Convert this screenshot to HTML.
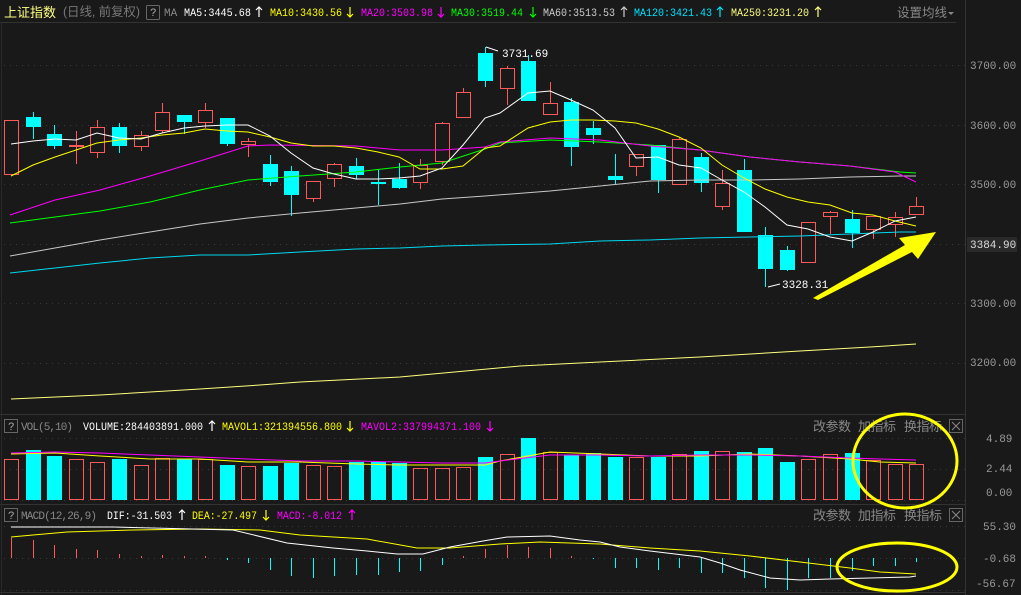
<!DOCTYPE html>
<html><head><meta charset="utf-8"><style>
html,body{margin:0;padding:0;background:#191919;width:1021px;height:595px;overflow:hidden}
svg{display:block}
text{font-family:"Liberation Mono","DejaVu Sans Mono",monospace;font-size:11px}
.cn{font-family:"Liberation Sans","Noto Sans CJK SC",sans-serif}
</style></head><body>
<svg id="s" width="1021" height="595" xmlns="http://www.w3.org/2000/svg">
<rect width="1021" height="595" fill="#191919"/>
<line x1="0" y1="22.5" x2="956" y2="22.5" stroke="#333"/>
<line x1="965.5" y1="0" x2="965.5" y2="595" stroke="#333"/>
<line x1="0" y1="414.5" x2="965" y2="414.5" stroke="#333"/>
<line x1="0" y1="504.5" x2="965" y2="504.5" stroke="#333"/>
<line x1="0" y1="592.5" x2="965" y2="592.5" stroke="#333"/>
<line x1="1.5" y1="22" x2="1.5" y2="595" stroke="#2a2a2a"/>
<g id="grid" stroke="#3a3a3a" stroke-dasharray="1,5"></g>
<g id="g"></g>
<text x="4" y="17" class="cn" fill="#ffff80" style="font-size:13px">上证指数</text>
<text x="63" y="16" class="cn" fill="#777" style="font-size:12.5px" textLength="77">(日线, 前复权)</text>
<rect x="146.5" y="5.5" width="13" height="14" fill="none" stroke="#666" rx="1"/>
<text x="150" y="16" fill="#aaa">?</text>
<text x="164" y="16" fill="#888">MA</text>
<g id="hdr"></g>
<text x="897" y="17" class="cn" fill="#888" style="font-size:12.5px">设置均线</text>
<path d="M948 12 l3 3 l3 -3z" fill="#888"/>
<g fill="#999">
<text x="970" y="69">3700.00</text><text x="970" y="129">3600.00</text><text x="970" y="188">3500.00</text>
<text x="970" y="307">3300.00</text><text x="970" y="366">3200.00</text>
<text x="986" y="442">4.89</text><text x="986" y="472">2.44</text><text x="986" y="496">0.00</text>
<text x="983" y="530">55.30</text><text x="983" y="562">-0.68</text><text x="976" y="587">-56.67</text>
</g>
<rect x="967" y="237" width="50" height="15" fill="#2a2a2a"/>
<text x="970" y="248" fill="#ddd">3384.90</text>
<text x="502" y="57" fill="#fff">3731.69</text>
<path d="M486 47 l12 4" stroke="#fff"/>
<text x="782" y="288" fill="#fff">3328.31</text>
<path d="M768 287 l12 -3" stroke="#fff"/>
<rect x="4.5" y="419.5" width="13" height="13" fill="none" stroke="#666"/>
<text x="8" y="430" fill="#aaa">?</text>
<text x="21" y="430" fill="#888" textLength="52">VOL(5,10)</text>
<rect x="949.5" y="419.5" width="13" height="13" fill="none" stroke="#666"/>
<path d="M952 422 l8 8 M960 422 l-8 8" stroke="#888"/>
<rect x="4.5" y="508.5" width="13" height="13" fill="none" stroke="#666"/>
<text x="8" y="519" fill="#aaa">?</text>
<text x="21" y="519" fill="#888" textLength="76">MACD(12,26,9)</text>
<rect x="949.5" y="508.5" width="13" height="13" fill="none" stroke="#666"/>
<path d="M952 511 l8 8 M960 511 l-8 8" stroke="#888"/>
<g id="top"></g>
</svg>
<script>
var NS="http://www.w3.org/2000/svg",G=document.getElementById('g'),T=document.getElementById('top'),GR=document.getElementById('grid'),H=document.getElementById('hdr');
function el(p,n,a){var e=document.createElementNS(NS,n);for(var k in a)e.setAttribute(k,a[k]);p.appendChild(e);return e;}
function lab(x,y,w,s,col,ax){var t=el(H,'text',{x:x,y:y,fill:col,textLength:w,lengthAdjust:'spacingAndGlyphs'});t.textContent=s;
 if(ax!==undefined){var d=ax[1]=='u'?'M'+ax[0]+' '+(y+1)+' v-10 M'+(ax[0]-3)+' '+(y-6)+' l3 -3 l3 3':'M'+ax[0]+' '+(y-9)+' v10 M'+(ax[0]-3)+' '+(y-2)+' l3 3 l3 -3';
 el(H,'path',{d:d,stroke:col,fill:'none','stroke-width':1.2});}}
lab(184,16,67,"MA5:3445.68","#fff",[259,'u']);
lab(270,16,72,"MA10:3430.56","#ffff00",[350,'d']);
lab(361,16,72,"MA20:3503.98","#ff00ff",[441,'d']);
lab(451,16,72,"MA30:3519.44","#00ff00",[533,'d']);
lab(543,16,72,"MA60:3513.53","#ccc",[624,'u']);
lab(634,16,78,"MA120:3421.43","#00e5ff",[720,'u']);
lab(731,16,78,"MA250:3231.20","#ffff80",[818,'u']);
lab(83,430,120,"VOLUME:284403891.000","#fff",[212,'u']);
lab(222,430,120,"MAVOL1:321394556.800","#ffff00",[350,'d']);
lab(361,430,120,"MAVOL2:337994371.100","#ff00ff",[490,'d']);
lab(107,519,65,"DIF:-31.503","#fff",[182,'u']);
lab(192,519,65,"DEA:-27.497","#ffff00",[266,'d']);
lab(277,519,65,"MACD:-8.012","#ff00ff",[352,'u']);
[[813,"改参数"],[858,"加指标"],[904,"换指标"]].forEach(function(a){[431,520].forEach(function(y){var t=el(H,'text',{x:a[0],y:y,fill:'#888','class':'cn',style:'font-size:13px',textLength:38});t.textContent=a[1];});});
[65,125,184,244,303,363].forEach(function(y){el(GR,'line',{x1:4,y1:y+.5,x2:965,y2:y+.5});});
[438,469,500].forEach(function(y){el(GR,'line',{x1:4,y1:y+.5,x2:965,y2:y+.5});});
[526,558,590].forEach(function(y){el(GR,'line',{x1:4,y1:y+.5,x2:965,y2:y+.5});});
var R="#ff5a5a",C="#00ffff";
var K=[[11,'r',120,174,120,174],[33,'c',117,126,112,139],[54,'c',134,145,125,149],[76,'r',145,146,131,164],[97,'r',127,152,120,158],[119,'c',127,145,123,153],[141,'r',135,146,131,151],[162,'r',112,130,103,133],[184,'c',115,121,115,134],[205,'r',110,122,103,128],[227,'c',118,143,118,146],[248,'r',141,144,138,157],[270,'c',164,181,155,186],[291,'c',171,194,166,216],[313,'r',181,198,181,202],[334,'r',164,178,163,187],[356,'c',166,174,158,179],[378,'c',182,183,170,205],[399,'c',179,187,163,189],[420,'r',165,182,159,189],[442,'r',123,161,122,165],[463,'r',92,117,88,117],[485,'c',53,80,47,87],[507,'r',68,88,66,105],[528,'c',61,100,55,100],[550,'r',103,114,82,114],[571,'c',102,146,98,166],[593,'c',128,134,121,144],[615,'c',176,179,154,184],[636,'r',154,166,154,176],[658,'c',145,179,145,193],[679,'r',139,184,138,184],[701,'c',157,182,153,192],[722,'r',183,206,170,210],[744,'c',170,231,159,231],[765,'c',235,268,227,287],[787,'c',250,269,246,271],[808,'r',222,262,222,262],[830,'r',212,216,211,234],[852,'c',219,232,210,248],[873,'r',216,229,216,239],[895,'r',217,224,212,237],[916,'r',206,214,197,214]];
K.forEach(function(k){var col=k[1]=='r'?R:C,x=k[0];
 el(G,'line',{x1:x+.5,y1:k[4],x2:x+.5,y2:k[5],stroke:col});
 var h=Math.max(1,k[3]-k[2]);
 if(k[1]=='r')el(G,'rect',{x:x-6.5,y:k[2]+.5,width:14,height:h,fill:'#191919',stroke:col});
 else el(G,'rect',{x:x-7,y:k[2],width:15,height:h+1,fill:col});
});
function pl(pts,col,w){el(G,'polyline',{points:pts,fill:'none',stroke:col,'stroke-width':w||1});}
pl("10,256 55,248 100,240 150,232 200,224 248,218 300,213 356,208 400,204 442,199 485,196 550,191 600,186 650,181 700,180 750,180 800,179 850,177 900,176 916,176","#c8c8c8");
pl("10,273 55,268 100,263 150,258 200,255 248,255 300,252 356,249 400,248 442,246 485,245 550,244 600,241 650,240 700,238 750,237 800,236 850,234 900,232 916,232","#00d8f0");
pl("11,399 100,395 200,389 260,385 300,382 400,377 520,366 600,362 700,357 800,351 870,347 916,344","#ffff80");
pl("10,223 55,217 100,211 150,202 200,190 248,180 300,176 356,172 400,167 442,163 485,149 500,143 550,140 600,142 650,145 700,150 750,157 800,162 850,166 900,172 916,173","#00ff00");
pl("10,215 55,200 100,190 150,176 200,161 248,146 270,145 356,146 400,150 442,150 485,147 500,142 550,138 600,140 650,146 700,150 750,157 800,162 850,166 895,172 916,182","#ff00ff");
pl("11,176 33,165 55,157 76,150 97,143 119,140 141,138 162,135 184,133 205,129 227,131 248,132 270,137 291,143 313,146 334,146 356,148 378,152 399,157 420,169 442,169 463,166 485,148 500,146 528,128 550,122 571,120 593,120 615,121 636,123 658,129 679,137 701,148 722,165 744,178 765,189 787,197 808,202 830,205 852,213 873,215 895,221 916,226","#ffff00");
pl("11,144 33,141 55,139 76,140 97,133 119,138 141,139 162,133 184,128 205,126 227,125 248,125 270,136 291,153 313,168 334,174 356,179 378,179 399,178 420,176 442,168 463,145 485,118 500,113 528,93 550,91 571,100 593,110 615,128 636,158 658,157 679,165 701,168 722,180 744,192 765,207 787,225 808,229 830,237 852,241 873,232 895,221 916,217","#ffffff");
var V=[459,450,456,459,462,459,465,458,459,459,465,466,466,463,465,466,462,462,463,468,468,467,457,454,438,452,455,453,457,457,457,454,451,451,452,448,462,459,454,453,460,464,464];
V.forEach(function(t,i){var k=K[i],x=k[0];
 if(k[1]=='r')el(G,'rect',{x:x-6.5,y:t+.5,width:14,height:500-t-1,fill:'none',stroke:R});
 else el(G,'rect',{x:x-7,y:t,width:15,height:500-t,fill:C});});
pl("11,454 55,453 100,456 150,459 200,459 248,462 300,462 356,464 400,465 442,465 485,465 500,461 550,452 600,454 650,456 700,456 750,454 800,456 850,459 880,462 916,463","#ffff00");
pl("11,453 55,452 100,453 150,455 200,457 248,459 300,461 356,461 400,462 442,463 485,463 500,461 550,455 600,455 650,456 700,455 750,455 800,456 850,458 880,459 916,460","#ff00ff");
var M=[538,540,545,549,550,554,556,555,556,556,560,563,570,576,578,576,575,575,572,571,565,556,549,545,547,548,556,559,568,568,570,568,573,573,578,588,590,578,578,571,566,566,562];
M.forEach(function(t,i){var x=K[i][0];el(G,'line',{x1:x+.5,y1:558,x2:x+.5,y2:t,stroke:t<558?R:C});});
pl("11,537 33,535 67,532 133,530 200,529 260,530 300,535 367,539 417,548 450,548 500,544 540,542 600,544 650,548 700,551 750,556 800,562 850,568 880,572 916,574","#ffff00");
pl("11,527 113,527 233,530 287,543 333,548 367,551 397,554 423,554 450,547 483,541 507,537 550,536 580,540 600,542 620,547 650,551 700,557 720,563 740,570 770,578 800,580 830,579 870,578 910,577 916,576","#ffffff");
el(T,'path',{d:'M813 298 L905 245 L899 238 L936 232 L918 259 L912 252 L818 300 Z',fill:'#ffff00'});
el(T,'ellipse',{cx:905,cy:461,rx:52,ry:47,fill:'none',stroke:'#ffff00','stroke-width':3});
el(T,'ellipse',{cx:897,cy:567,rx:60,ry:24,fill:'none',stroke:'#ffff00','stroke-width':3});
</script>
</body></html>
